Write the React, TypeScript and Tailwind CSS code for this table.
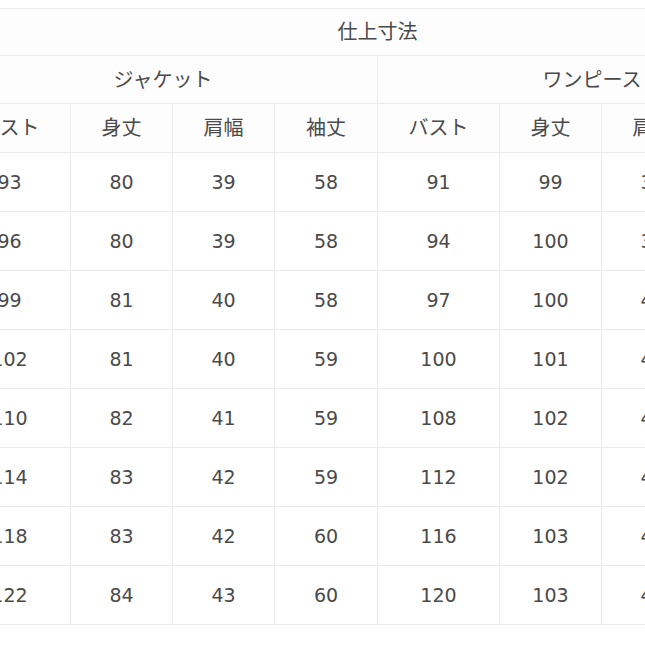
import React from "react";

const cols = [122, 102, 102, 103, 122, 102, 102, 103];
const sub = ["バスト", "身丈", "肩幅", "袖丈", "バスト", "身丈", "肩幅", "袖丈"];
const rows = [
  [93, 80, 39, 58, 91, 99, 39, 60],
  [96, 80, 39, 58, 94, 100, 39, 60],
  [99, 81, 40, 58, 97, 100, 40, 60],
  [102, 81, 40, 59, 100, 101, 40, 60],
  [110, 82, 41, 59, 108, 102, 41, 61],
  [114, 83, 42, 59, 112, 102, 42, 61],
  [118, 83, 42, 60, 116, 103, 42, 62],
  [122, 84, 43, 60, 120, 103, 43, 62],
];

export default function App() {
  const cell = "border border-[#ebebeb] text-center align-middle p-0";
  const head = cell + " bg-[#fdfdfd] text-[20px]";
  return (
    <div
      className="w-[645px] h-[645px] overflow-hidden bg-white pt-[8px]"
      style={{ fontFamily: '"DejaVu Sans", "Noto Sans CJK JP", sans-serif' }}
    >
      <table className="border-collapse table-fixed ml-[-52px] w-[858px] text-[19px] text-[#4a4a4a]">
        <colgroup>
          {cols.map((w, i) => (
            <col key={i} style={{ width: w }} />
          ))}
        </colgroup>
        <tbody>
          <tr className="h-[47px]">
            <td colSpan={8} className={head}>
              仕上寸法
            </td>
          </tr>
          <tr className="h-[48px]">
            <td colSpan={4} className={head}>
              ジャケット
            </td>
            <td colSpan={4} className={head}>
              ワンピース
            </td>
          </tr>
          <tr className="h-[49px]">
            {sub.map((s, i) => (
              <td key={i} className={head}>
                {s}
              </td>
            ))}
          </tr>
          {rows.map((r, ri) => (
            <tr key={ri} className="h-[59px]">
              {r.map((v, i) => (
                <td key={i} className={cell}>
                  {v}
                </td>
              ))}
            </tr>
          ))}
        </tbody>
      </table>
    </div>
  );
}
